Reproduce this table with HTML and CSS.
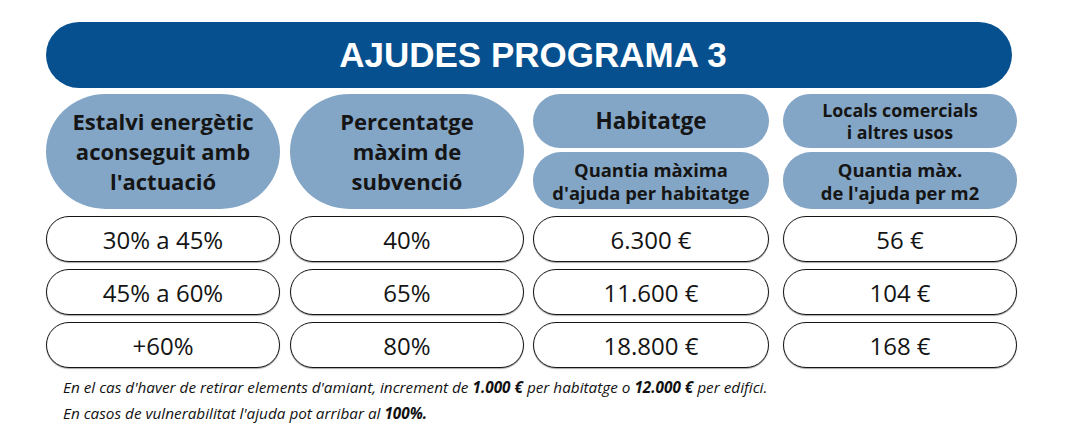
FILE: index.html
```html
<!DOCTYPE html>
<html lang="ca">
<head>
<meta charset="utf-8">
<title>Ajudes Programa 3</title>
<link rel="stylesheet" href="styles.css">
</head>
<body>
<div class="page">
  <div class="title">AJUDES PROGRAMA 3</div>
  <div class="table">
    <div class="col c1">
      <div class="head tall">Estalvi energètic<br>aconseguit amb<br>l'actuació</div>
      <div class="cell">30% a 45%</div>
      <div class="cell">45% a 60%</div>
      <div class="cell">+60%</div>
    </div>
    <div class="col c2">
      <div class="head tall">Percentatge<br>màxim de<br>subvenció</div>
      <div class="cell">40%</div>
      <div class="cell">65%</div>
      <div class="cell">80%</div>
    </div>
    <div class="col c3">
      <div class="head top big">Habitatge</div>
      <div class="head sub">Quantia màxima<br>d'ajuda per habitatge</div>
      <div class="cell">6.300 €</div>
      <div class="cell">11.600 €</div>
      <div class="cell">18.800 €</div>
    </div>
    <div class="col c4">
      <div class="head top">Locals comercials<br>i altres usos</div>
      <div class="head sub">Quantia màx.<br>de l'ajuda per m2</div>
      <div class="cell">56 €</div>
      <div class="cell">104 €</div>
      <div class="cell">168 €</div>
    </div>
  </div>
  <div class="notes">
    <p>En el cas d'haver de retirar elements d'amiant, increment de <b>1.000 €</b> per habitatge o <b>12.000 €</b> per edifici.</p>
    <p>En casos de vulnerabilitat l'ajuda pot arribar al <b>100%.</b></p>
  </div>
</div>
</body>
</html>
```
FILE: styles.css
```css
* { box-sizing: border-box; }
html, body { margin: 0; padding: 0; background: #ffffff; }
body { font-family: "Open Sans", "Noto Sans", sans-serif; color: #111; }
.page { padding: 22px 0 0 46px; width: 1065px; }
.title {
  width: 966px;
  height: 66px;
  border-radius: 33px;
  background: #07508f;
  color: #fff;
  font-family: "Liberation Sans", Arial, sans-serif;
  font-weight: bold;
  font-size: 35px;
  display: flex;
  align-items: center;
  justify-content: center;
  padding-left: 8px;
}
.table {
  display: flex;
  gap: 10px;
  margin-top: 6px;
}
.col { width: 234px; display: flex; flex-direction: column; gap: 7px; }
.c3 { width: 236px; margin-left: -1px; }
.c4 { margin-left: 4px; }
.head {
  background: #84a6c6;
  color: #151515;
  font-weight: 700;
  text-align: center;
  display: flex;
  align-items: center;
  justify-content: center;
}
.tall {
  height: 115px;
  border-radius: 60px / 58px;
  font-size: 22px;
  line-height: 30px;
  padding-bottom: 2px;
}
.top { height: 54px; border-radius: 27px; font-size: 17.8px; line-height: 22px; }
.top.big { font-size: 22.5px; }
.sub { height: 57px; border-radius: 28px; font-size: 18.4px; line-height: 23px; margin-top: -3px; }
.cell {
  height: 46px;
  border: 1.5px solid #141414;
  border-radius: 23px;
  background: #fff;
  box-shadow: 0 1px 1px rgba(0,0,0,0.35);
  font-size: 24px;
  display: flex;
  align-items: center;
  justify-content: center;
  color: #141414;
}
.notes { padding: 6px 0 0 17px; font-style: italic; font-size: 15.3px; color: #111; }
.notes p { margin: 0; line-height: 26px; }
.notes b { font-weight: 700; }
```
